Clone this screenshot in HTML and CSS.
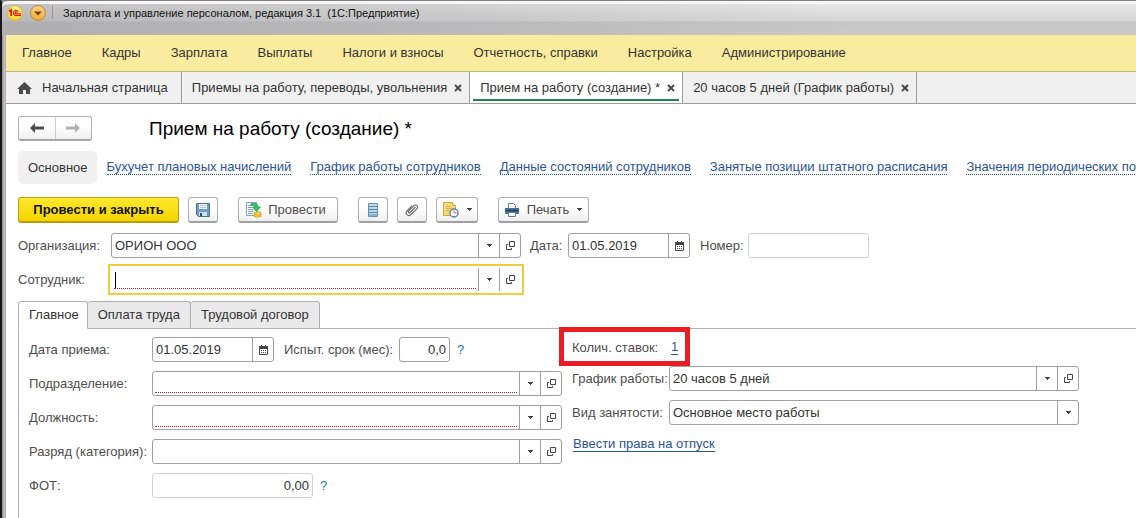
FILE: index.html
```
<!DOCTYPE html>
<html lang="ru">
<head>
    <meta charset="UTF-8" />
    <title>Прием на работу (создание)</title>
    <link rel="stylesheet" href="styles.css">
</head>
<body>
    <!-- Общие значки -->
    <svg class="sprite" aria-hidden="true">
        <symbol id="i-down" viewBox="0 0 5 3"><path d="M0 0h5v1H4v1H3v1H2V2H1V1H0z" fill="#444"/></symbol>
        <symbol id="i-open" viewBox="0 0 9 9"><path d="M3.5.5h5v5h-5zM2 3.500H.5v5h5V7" fill="none" stroke="#444"/></symbol>
        <symbol id="i-close" viewBox="0 0 8 8"><path d="M1 1l6 6M7 1L1 7" fill="none" stroke="#4a4a4a" stroke-width="2"/></symbol>
        <symbol id="i-cal" viewBox="0 0 9 10"><path d="M.5 2.500h8v7h-8z" fill="#fff" stroke="#444"/><path d="M0 1h9v3H0zM2 0h1v2H2zM6 0h1v2H6zM2 5h1v1H2zM4 5h1v1H4zM6 5h1v1H6zM2 7h1v1H2zM4 7h1v1H4zM6 7h1v1H6z" fill="#444"/></symbol>
    </svg>

    <div class="window">
        <header class="titlebar">
            <svg class="logo" viewBox="0 0 16 16" width="16" height="16">
                <defs>
                    <radialGradient id="gLogo" cx=".5" cy=".3" r=".7"><stop offset="0" stop-color="#fff9a8"/><stop offset="1" stop-color="#f5cf1d"/></radialGradient>
                    <linearGradient id="gMenu" x2="0" y2="1"><stop offset="0" stop-color="#fbd38a"/><stop offset="1" stop-color="#f3a83a"/></linearGradient>
                </defs>
                <circle cx="8" cy="8" r="7.500" fill="url(#gLogo)" stroke="#d9b84a"/>
                <path d="M2 6.500L4.200 5v6" fill="none" stroke="#d8190f" stroke-width="1.800"/>
                <path d="M11.200 6.600A2.600 2.600 0 1 0 8.700 10.500H14M10 7.700A1 1 0 1 0 8.900 8.900H14" fill="none" stroke="#d8190f" stroke-width="1.100"/>
            </svg>
            <button class="sysmenu" aria-label="Меню">
                <svg viewBox="0 0 16 16" width="16" height="16"><circle cx="8" cy="8" r="7.500" fill="url(#gMenu)" stroke="#b98a45"/><path d="M4 6.500h8L8 10.500z" fill="#6b431b"/></svg>
            </button>
            <span class="separator"></span>
            <span class="caption">Зарплата и управление персоналом, редакция 3.1&nbsp; (1С:Предприятие)</span>
        </header>

        <nav class="sections">
            <a href="#">Главное</a>
            <a href="#">Кадры</a>
            <a href="#">Зарплата</a>
            <a href="#">Выплаты</a>
            <a href="#">Налоги и взносы</a>
            <a href="#">Отчетность, справки</a>
            <a href="#">Настройка</a>
            <a href="#">Администрирование</a>
        </nav>

        <div class="pages">
            <a class="page home" href="#">
                <svg viewBox="0 0 15 12" width="15" height="12"><path d="M7.500 0L15 7h-2v5H9V8H6v4H2V7H0z" fill="#4a4a4a"/></svg>
                Начальная страница
            </a>
            <div class="page"><a href="#">Приемы на работу, переводы, увольнения</a><button aria-label="Закрыть"><svg width="8" height="8"><use href="#i-close"/></svg></button></div>
            <div class="page active"><a href="#">Прием на работу (создание) *</a><button aria-label="Закрыть"><svg width="8" height="8"><use href="#i-close"/></svg></button></div>
            <div class="page"><a href="#">20 часов 5 дней (График работы)</a><button aria-label="Закрыть"><svg width="8" height="8"><use href="#i-close"/></svg></button></div>
        </div>

        <main>
            <div class="heading">
                <div class="history">
                    <button aria-label="Назад"><svg viewBox="0 0 14 10" width="14" height="10"><path d="M0 5l5-5v3.500h9v3H5V10z" fill="#4a4a4a"/></svg></button>
                    <button aria-label="Вперед"><svg viewBox="0 0 14 10" width="14" height="10"><path d="M14 5L9 0v3.500H0v3h9V10z" fill="#b0b0b0"/></svg></button>
                </div>
                <h1>Прием на работу (создание) *</h1>
            </div>

            <nav class="subnav">
                <span class="current">Основное</span>
                <a href="#">Бухучет плановых начислений</a>
                <a href="#">График работы сотрудников</a>
                <a href="#">Данные состояний сотрудников</a>
                <a href="#">Занятые позиции штатного расписания</a>
                <a href="#">Значения периодических показателей</a>
            </nav>

            <div class="toolbar">
                <button class="btn primary">Провести и закрыть</button>
                <button class="btn icon" aria-label="Записать">
                    <svg viewBox="0 0 14 14" width="14" height="14"><path d="M.5.500h13v13h-11l-2-2z" fill="#6f9cc4" stroke="#44719b"/><path d="M3 1h8v5H3z" fill="#f3f8fc"/><path d="M4 2.500h6M4 4.500h6" stroke="#b4cadd"/><path d="M3 9h8v4H3z" fill="#d5dde4"/><path d="M4 10h2v3H4z" fill="#2f4d6b"/></svg>
                </button>
                <button class="btn post">
                    <svg viewBox="0 0 16 16" width="16" height="16"><path d="M.5.500h10v13H.5z" fill="#fff" stroke="#8ba0b0"/><path d="M2 3.500h4M2 5.500h4M2 7.500h5M2 9.500h5M2 11.500h5" stroke="#7e98ab"/><path d="M5 1.500h4q3 0 3 3.500h2.500L10.500 9.500 6.500 5H9q0-1.500-1.500-1.500H5z" fill="#28c862" stroke="#118e42" stroke-width=".6"/><path d="M8 10.500q3.500-1.500 7 0v4q-3.500 1.500-7 0z" fill="#f6d64f" stroke="#c49a1d" stroke-width=".8"/><path d="M8 12.500q3.500 1.500 7 0" fill="none" stroke="#c49a1d" stroke-width=".8"/></svg>
                    Провести
                </button>
                <button class="btn icon" aria-label="Движения">
                    <svg viewBox="0 0 10 14" width="10" height="14"><path d="M.5.500h9v13h-9z" fill="#bcdaee" stroke="#6790b0"/><path d="M1 3.500h8M1 6.500h8M1 9.500h8M1 12h8" stroke="#5b88aa"/></svg>
                </button>
                <button class="btn icon" aria-label="Файлы">
                    <svg viewBox="0 0 14 14" width="14" height="14"><path d="M10.500 4L5 9.500q-.8.800-1.500.1t.1-1.500L9 2.700q1.700-1.500 3 0t0 3L6 11.500q-2.200 2-4 .2t0-3.900L7 2.700" fill="none" stroke="#666" stroke-width="1.100"/></svg>
                </button>
                <button class="btn drop" aria-label="Отчеты">
                    <svg viewBox="0 0 16 16" width="16" height="16"><path d="M.5.500h9l3 3v10H.5z" fill="#f5d978" stroke="#d0a93c"/><path d="M9.500.500v3h3" fill="#fff0bd" stroke="#d0a93c"/><path d="M3 4.500h5M3 6.500h6M3 8.500h4" stroke="#d9b44c"/><circle cx="11" cy="11" r="4" fill="#fff" stroke="#5e7f9e" stroke-width="1.400"/><path d="M11 8.500V11h2.500" fill="none" stroke="#cf5d42"/></svg>
                    <svg width="5" height="3"><use href="#i-down"/></svg>
                </button>
                <button class="btn print">
                    <svg viewBox="0 0 14 14" width="14" height="14"><path d="M3.500 5V.500h5l2 2V5" fill="#fff" stroke="#5f7b94"/><path d="M0 5h14v6H0z" fill="#4d7398"/><path d="M1 7.500h12" stroke="#234766" stroke-width="2"/><path d="M3.500 9.500h7v4h-7z" fill="#fff" stroke="#5f7b94"/></svg>
                    Печать
                    <svg width="5" height="3"><use href="#i-down"/></svg>
                </button>
            </div>

            <div class="row">
                <label class="head-label" for="org">Организация:</label>
                <div class="field long">
                    <input type="text" id="org" value="ОРИОН ООО">
                    <button aria-label="Выбрать"><svg width="5" height="3"><use href="#i-down"/></svg></button>
                    <button aria-label="Открыть"><svg width="9" height="9"><use href="#i-open"/></svg></button>
                </div>
                <label class="inline-label" for="date">Дата:</label>
                <div class="field date">
                    <input type="text" id="date" value="01.05.2019">
                    <button aria-label="Календарь"><svg width="9" height="10"><use href="#i-cal"/></svg></button>
                </div>
                <label class="inline-label number-label" for="number">Номер:</label>
                <div class="field number readonly"><input type="text" id="number" readonly></div>
            </div>

            <div class="row">
                <label class="head-label" for="employee">Сотрудник:</label>
                <div class="field long focused">
                    <span class="caret"></span>
                    <input class="required" type="text" id="employee">
                    <button aria-label="Выбрать"><svg width="5" height="3"><use href="#i-down"/></svg></button>
                    <button aria-label="Открыть"><svg width="9" height="9"><use href="#i-open"/></svg></button>
                </div>
            </div>

            <div class="tabs">
                <button class="active">Главное</button>
                <button>Оплата труда</button>
                <button>Трудовой договор</button>
            </div>

            <section class="panel">
                <div class="column left">
                    <div class="row">
                        <label class="left-label" for="hired">Дата приема:</label>
                        <div class="field date">
                            <input type="text" id="hired" value="01.05.2019">
                            <button aria-label="Календарь"><svg width="9" height="10"><use href="#i-cal"/></svg></button>
                        </div>
                        <label class="trial-label" for="trial">Испыт. срок (мес):</label>
                        <div class="field trial"><input class="num" type="text" id="trial" value="0,0"></div>
                        <a class="help" href="#">?</a>
                    </div>
                    <div class="row">
                        <label class="left-label" for="dept">Подразделение:</label>
                        <div class="field long">
                            <input class="required" type="text" id="dept">
                            <button aria-label="Выбрать"><svg width="5" height="3"><use href="#i-down"/></svg></button>
                            <button aria-label="Открыть"><svg width="9" height="9"><use href="#i-open"/></svg></button>
                        </div>
                    </div>
                    <div class="row">
                        <label class="left-label" for="position">Должность:</label>
                        <div class="field long">
                            <input class="required" type="text" id="position">
                            <button aria-label="Выбрать"><svg width="5" height="3"><use href="#i-down"/></svg></button>
                            <button aria-label="Открыть"><svg width="9" height="9"><use href="#i-open"/></svg></button>
                        </div>
                    </div>
                    <div class="row">
                        <label class="left-label" for="grade">Разряд (категория):</label>
                        <div class="field long">
                            <input type="text" id="grade">
                            <button aria-label="Выбрать"><svg width="5" height="3"><use href="#i-down"/></svg></button>
                            <button aria-label="Открыть"><svg width="9" height="9"><use href="#i-open"/></svg></button>
                        </div>
                    </div>
                    <div class="row">
                        <label class="left-label" for="fot">ФОТ:</label>
                        <div class="field fot readonly"><input class="num" type="text" id="fot" value="0,00" readonly></div>
                        <a class="help" href="#">?</a>
                    </div>
                </div>

                <div class="column right">
                    <div class="row rates">
                        <span class="right-label">Колич. ставок:</span>
                        <a class="link" href="#">1</a>
                        <span class="highlight"></span>
                    </div>
                    <div class="row">
                        <label class="right-label" for="schedule">График работы:</label>
                        <div class="field long">
                            <input type="text" id="schedule" value="20 часов 5 дней">
                            <button aria-label="Выбрать"><svg width="5" height="3"><use href="#i-down"/></svg></button>
                            <button aria-label="Открыть"><svg width="9" height="9"><use href="#i-open"/></svg></button>
                        </div>
                    </div>
                    <div class="row">
                        <label class="right-label" for="kind">Вид занятости:</label>
                        <div class="field long select">
                            <select id="kind"><option>Основное место работы</option></select>
                            <span class="arrow"><svg width="5" height="3"><use href="#i-down"/></svg></span>
                        </div>
                    </div>
                    <a class="link leave" href="#">Ввести права на отпуск</a>
                </div>
            </section>
        </main>
    </div>
</body>
</html>
```
FILE: styles.css
```
* {
    box-sizing: border-box;
}

body {
    margin: 0;
    background: #fff;
    color: #333;
    font: 13px/16px "Liberation Sans", Arial, sans-serif;
    overflow: hidden;
}

a {
    color: inherit;
    text-decoration: none;
}

button, input, select {
    font: inherit;
    color: inherit;
    margin: 0;
    padding: 0;
    border: none;
    background: none;
}

button {
    display: flex;
    align-items: center;
    justify-content: center;
    cursor: pointer;
}

svg {
    display: block;
    flex: none;
}

.sprite {
    position: absolute;
    width: 0;
    height: 0;
}

.window {
    min-height: 100vh;
    border-left: 2px solid #1a1718;
    border-top: 1px solid #807c80;
    background: linear-gradient(to right, #8a8689, #c4c1c3 2px, #aaa8aa 4px);
    padding-left: 4px;
}

/* Заголовок окна */
.titlebar {
    height: 34px;
    margin-left: -4px;
    padding: 1px 0 0 5px;
    border-top: 3px solid #f7f7f7;
    border-radius: 6px 0 0 0;
    display: flex;
    align-items: flex-start;
    background: linear-gradient(to right, rgba(130,130,134,.35), rgba(130,130,134,.2) 40%, transparent 75%), linear-gradient(#e6e6e6, #d6d6d7 17px, #c6c6c7 18px, #c9c9c9);
    color: #111;
    font-size: 11px;
}

.sysmenu {
    margin-left: 7px;
}

.separator {
    width: 1px;
    height: 14px;
    margin: 0 10px 0 6px;
    background: #9b9b9d;
}

/* Разделы */
.sections {
    height: 37px;
    display: flex;
    align-items: center;
    gap: 30px;
    padding-left: 16px;
    background: #faec9e;
    border-bottom: 1px solid #c2b77c;
}

/* Открытые страницы */
.pages {
    height: 32px;
    display: flex;
    background: #f0f0f0;
    border-bottom: 1px solid #9c9c9c;
}

.page {
    display: flex;
    align-items: center;
    gap: 7px;
    padding: 0 7px 0 10px;
    border-right: 1px solid #9c9c9c;
    white-space: nowrap;
}

.page.home {
    gap: 10px;
    padding: 0 13px 0 11px;
}

.page.active {
    background: linear-gradient(#22814e, #22814e) 3px 27px / calc(100% - 6px) 2px no-repeat #fff;
}

main {
    padding: 12px 0 0 12px;
    min-height: calc(100vh - 104px);
    background: #fff;
    color: #4d4d4d;
}

.heading {
    display: flex;
    align-items: center;
    gap: 57px;
    height: 25px;
    margin-bottom: 10px;
}

.history {
    display: flex;
    width: 74px;
    height: 25px;
    border: 1px solid #b0b0b0;
    border-bottom: 2px solid #a6a6a6;
    border-radius: 3px;
    background: linear-gradient(#fff 40%, #f0f0f0);
}

.history button {
    flex: 1;
}

.history button + button {
    border-left: 1px solid #ccc;
}

h1 {
    margin: 0;
    color: #000;
    font-size: 19px;
    line-height: 24px;
    font-weight: normal;
}

.subnav {
    display: flex;
    align-items: center;
    gap: 19px;
    height: 33px;
    margin-bottom: 13px;
    white-space: nowrap;
    overflow: hidden;
}

.subnav .current {
    padding: 9px 9px 8px 10px;
    margin-right: -9px;
    border-radius: 5px;
    background: #f0f0f0;
    color: #333;
}

.subnav a {
    color: #2a5496;
    line-height: 14px;
    border-bottom: 1px dotted #2a5496;
}

/* Командная панель */
.toolbar {
    display: flex;
    gap: 9px;
    margin-bottom: 10px;
}

.btn {
    height: 26px;
    gap: 8px;
    border: 1px solid #b0b0b0;
    border-bottom: 2px solid #a0a0a0;
    border-radius: 3px;
    background: linear-gradient(#fff 40%, #efefef);
}

.primary {
    width: 161px;
    border-color: #b79d10;
    background: linear-gradient(#ffe92e, #f4d400);
    color: #111;
    font-weight: bold;
}

.icon {
    width: 30px;
}

.post {
    gap: 6px;
    width: 100px;
    margin: 0 11px;
    padding-right: 4px;
}

.drop {
    width: 42px;
}

.print {
    width: 91px;
    margin-left: 11px;
}

/* Поля ввода */
.row {
    display: flex;
    align-items: center;
    height: 25px;
    margin-bottom: 9px;
    white-space: nowrap;
}

.field {
    position: relative;
    display: flex;
    flex: none;
    height: 25px;
    border: 1px solid #a0a0a0;
    border-radius: 3px;
    background: #fff;
    color: #333;
}

.field input, .field select {
    flex: 1;
    min-width: 0;
    margin: 2px;
    padding: 0 1px;
    outline: none;
}

.field .required {
    border-bottom: 1px dotted #c01818;
}

.field .num {
    text-align: right;
}

.field button, .field .arrow {
    width: 21px;
    border-left: 1px solid #a0a0a0;
}

.field select {
    appearance: none;
}

.select .arrow {
    display: flex;
    align-items: center;
    justify-content: center;
    pointer-events: none;
}

.readonly {
    border-color: #d3d3d3;
}

.focused {
    border-color: transparent;
    outline: 2px solid #efcb3f;
    outline-offset: 1px;
    border-radius: 0;
}

.caret {
    position: absolute;
    left: 3px;
    top: 4px;
    width: 1px;
    height: 16px;
    background: #000;
}

.long {
    width: 410px;
}

.date {
    width: 122px;
}

.number {
    width: 121px;
}

.trial {
    width: 51px;
}

.fot {
    width: 161px;
}

.head-label {
    width: 93px;
}

.inline-label {
    width: 47px;
    padding-left: 9px;
}

.number-label {
    width: 58px;
    padding-left: 10px;
}

.left-label {
    width: 123px;
}

.trial-label {
    width: 125px;
    padding-left: 10px;
}

.right-label {
    width: 97px;
}

.help {
    margin-left: 7px;
    color: #1478b8;
}

.link {
    color: #2a5496;
    border-bottom: 1px solid #2a5496;
    line-height: 14px;
}

/* Вкладки формы */
.tabs {
    display: flex;
    height: 28px;
    margin-bottom: -1px;
    position: relative;
}

.tabs button {
    padding: 0 10px;
    border: 1px solid #b0b0b0;
    border-left-width: 0;
    border-radius: 3px 3px 0 0;
    background: #e9e9e9;
    color: #333;
}

.tabs .active {
    padding-right: 8px;
    border-left-width: 1px;
    border-bottom-color: #fff;
    background: #fff;
}

.panel {
    display: flex;
    gap: 10px;
    min-height: 192px;
    padding: 8px 0 0 10px;
    border: 1px solid #b0b0b0;
    border-width: 1px 0 0 1px;
}

.left {
    width: 533px;
}

.right {
    padding-top: 3px;
}

.rates {
    position: relative;
    height: 15px;
    margin-bottom: 11px;
}

.rates .link {
    margin-left: 2px;
}

.leave {
    display: inline-block;
    margin: 3px 0 0 1px;
}

.highlight {
    position: absolute;
    left: -13px;
    top: -13px;
    width: 131px;
    height: 39px;
    border: 5px solid #ec1c24;
}
```
